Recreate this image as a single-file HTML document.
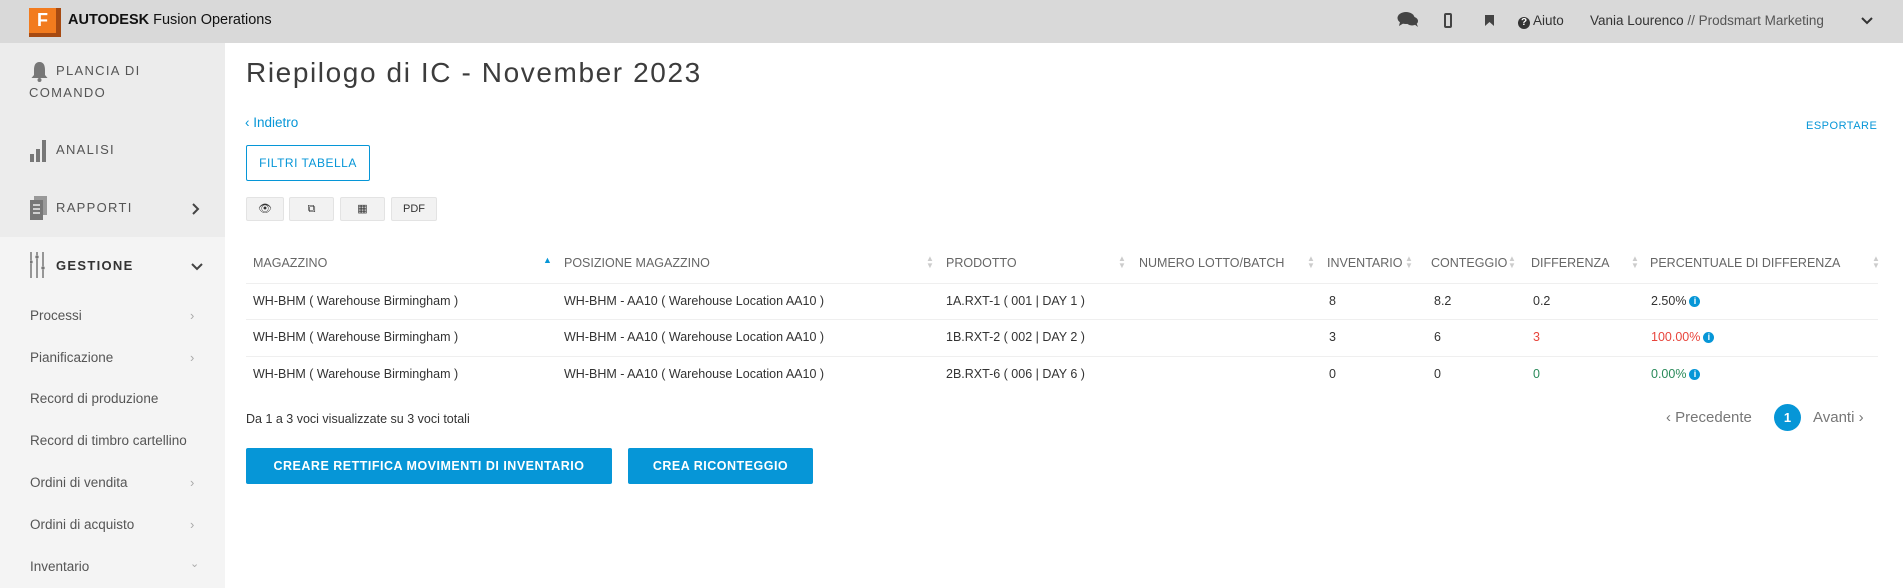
<!DOCTYPE html>
<html><head><meta charset="utf-8"><style>
*{box-sizing:border-box;margin:0;padding:0}
body{width:1903px;height:588px;overflow:hidden;background:#fff;font-family:"Liberation Sans",sans-serif;color:#3c3c3c;position:relative}
.a{position:absolute;white-space:nowrap}
#top{position:absolute;left:0;top:0;width:1903px;height:43px;background:#d9d9d9}
#side{position:absolute;left:0;top:43px;width:225px;height:545px;background:#ececec}
#side2{position:absolute;left:0;top:237px;width:225px;height:351px;background:#f4f4f4}
.sb{font-size:13px;letter-spacing:1.3px;color:#555}
.sub{font-size:13.5px;color:#555;left:30px}
.chev{color:#aaa;font-size:13px;left:190px}
.th{font-size:12.5px;color:#666;top:256px}
.sort{top:255px;font-size:8px;line-height:7px;color:#ccc}
.td{font-size:12.5px;color:#333}
.line{position:absolute;left:246px;width:1632px;height:1px;background:#efefef}
.ib{position:absolute;top:197px;height:24px;border:1px solid #e3e3e3;background:#f2f2f2;border-radius:2px;font-size:11px;color:#333;text-align:center;line-height:22px}
.btn{position:absolute;top:448px;height:36px;background:#0696d7;color:#fff;font-size:12.5px;font-weight:bold;letter-spacing:.5px;text-align:center;line-height:36px;border-radius:2px}
.info{display:inline-block;width:11px;height:11px;border-radius:50%;background:#0696d7;color:#fff;font-size:9px;font-weight:bold;text-align:center;line-height:11px;vertical-align:1px;margin-left:3px}
</style></head><body>
<div id="top"></div>
<div class="a" style="left:29px;top:8px;width:32px;height:29px;background:#a64a12"></div>
<div class="a" style="left:29px;top:8px;width:27px;height:25px;background:#f27b1e;color:#fff;font-weight:bold;font-size:18px;text-align:center;line-height:25px">F</div>
<div class="a" style="left:68px;top:12px;font-size:14.5px;color:#111"><b>AUTODESK</b> Fusion Operations</div>
<svg class="a" style="left:1397px;top:11px" width="22" height="18" viewBox="0 0 22 18"><ellipse cx="9" cy="7" rx="8.5" ry="6" fill="#444"/><path d="M3 11 L2 15 L7 12Z" fill="#444"/><ellipse cx="15" cy="10" rx="6" ry="4.5" fill="#444"/><path d="M17 13 L21 16 L19 11Z" fill="#444"/></svg>
<div class="a" style="left:1444px;top:13px;width:8px;height:15px;border:2px solid #444;border-radius:2px"></div>
<svg class="a" style="left:1485px;top:15px" width="9" height="11"><path d="M0 0H9V11L4.5 7L0 11Z" fill="#444"/></svg>
<div class="a" style="left:1518px;top:13px;font-size:13.5px;color:#333"><span style="display:inline-block;width:12px;height:12px;border-radius:50%;background:#333;color:#fff;font-size:10px;font-weight:bold;text-align:center;line-height:12px">?</span> Aiuto</div>
<div class="a" style="left:1590px;top:13px;font-size:13.5px;color:#333"><span style="color:#333">Vania Lourenco</span> <span style="color:#555">// Prodsmart Marketing</span></div>
<svg class="a" style="left:1861px;top:17px" width="12" height="8"><path d="M1 1L6 6L11 1" stroke="#333" stroke-width="2" fill="none"/></svg>

<div id="side"></div><div id="side2"></div>
<svg class="a" style="left:30px;top:61px" width="19" height="21"><path d="M9.5 1C5 1 4 5 4 9V14L1.5 17H17.5L15 14V9C15 5 14 1 9.5 1Z" fill="#777"/><circle cx="9.5" cy="19" r="2" fill="#777"/></svg>
<div class="a sb" style="left:56px;top:63px">PLANCIA DI</div>
<div class="a sb" style="left:29px;top:85px">COMANDO</div>
<svg class="a" style="left:30px;top:140px" width="17" height="22"><rect x="0" y="14" width="4" height="8" fill="#777"/><rect x="6" y="9" width="4" height="13" fill="#777"/><rect x="12" y="0" width="4" height="22" fill="#777"/></svg>
<div class="a sb" style="left:56px;top:142px">ANALISI</div>
<svg class="a" style="left:30px;top:196px" width="18" height="24"><rect x="4" y="0" width="13" height="19" fill="#999"/><rect x="0" y="4" width="13" height="20" fill="#777"/><path d="M3 9H10M3 13H10M3 17H10" stroke="#eee" stroke-width="1.5"/></svg>
<div class="a sb" style="left:56px;top:200px">RAPPORTI</div>
<svg class="a" style="left:192px;top:203px" width="8" height="12"><path d="M1 1L6 6L1 11" stroke="#444" stroke-width="2" fill="none"/></svg>
<svg class="a" style="left:30px;top:252px" width="15" height="26"><path d="M1 0V8M1 12V26M7 0V3M7 7V26M13 0V14M13 18V26" stroke="#777" stroke-width="1.5"/><circle cx="1" cy="10" r="1.7" fill="#777"/><circle cx="7" cy="5" r="1.7" fill="#777"/><circle cx="13" cy="16" r="1.7" fill="#777"/></svg>
<div class="a sb" style="left:56px;top:258px;color:#333;font-weight:bold">GESTIONE</div>
<svg class="a" style="left:191px;top:263px" width="12" height="8"><path d="M1 1L6 6L11 1" stroke="#444" stroke-width="2" fill="none"/></svg>
<div class="a sub" style="top:308px">Processi</div><div class="a chev" style="top:308px">›</div>
<div class="a sub" style="top:350px">Pianificazione</div><div class="a chev" style="top:350px">›</div>
<div class="a sub" style="top:391px">Record di produzione</div>
<div class="a sub" style="top:433px">Record di timbro cartellino</div>
<div class="a sub" style="top:475px">Ordini di vendita</div><div class="a chev" style="top:475px">›</div>
<div class="a sub" style="top:517px">Ordini di acquisto</div><div class="a chev" style="top:517px">›</div>
<div class="a sub" style="top:559px">Inventario</div><div class="a chev" style="top:557px;font-size:11px">⌄</div>

<div class="a" style="left:246px;top:57px;font-size:28px;letter-spacing:1.6px;color:#3c3c3c">Riepilogo di IC - November 2023</div>
<div class="a" style="left:245px;top:115px;font-size:13.5px;color:#0696d7">‹ Indietro</div>
<div class="a" style="left:1806px;top:120px;font-size:11px;letter-spacing:.5px;color:#0696d7">ESPORTARE</div>
<div class="a" style="left:246px;top:145px;width:124px;height:36px;border:1px solid #0696d7;border-radius:2px;color:#0696d7;font-size:12px;letter-spacing:.5px;text-align:center;line-height:34px">FILTRI TABELLA</div>
<div class="ib" style="left:246px;width:38px">👁</div>
<div class="ib" style="left:289px;width:45px">⧉</div>
<div class="ib" style="left:340px;width:45px">▦</div>
<div class="ib" style="left:391px;width:46px">PDF</div>

<div class="a th" style="left:253px">MAGAZZINO</div>
<div class="a" style="left:543px;top:255px;font-size:9px;color:#0696d7">▲</div>
<div class="a th" style="left:564px">POSIZIONE MAGAZZINO</div>
<div class="a sort" style="left:926px">▲<br>▼</div>
<div class="a th" style="left:946px">PRODOTTO</div>
<div class="a sort" style="left:1118px">▲<br>▼</div>
<div class="a th" style="left:1139px">NUMERO LOTTO/BATCH</div>
<div class="a sort" style="left:1307px">▲<br>▼</div>
<div class="a th" style="left:1327px">INVENTARIO</div>
<div class="a sort" style="left:1405px">▲<br>▼</div>
<div class="a th" style="left:1431px">CONTEGGIO</div>
<div class="a sort" style="left:1508px">▲<br>▼</div>
<div class="a th" style="left:1531px">DIFFERENZA</div>
<div class="a sort" style="left:1631px">▲<br>▼</div>
<div class="a th" style="left:1650px">PERCENTUALE DI DIFFERENZA</div>
<div class="a sort" style="left:1872px">▲<br>▼</div>
<div class="line" style="top:283px"></div>
<div class="line" style="top:319px"></div>
<div class="line" style="top:356px"></div>

<div class="a td" style="left:253px;top:294px">WH-BHM ( Warehouse Birmingham )</div>
<div class="a td" style="left:564px;top:294px">WH-BHM - AA10 ( Warehouse Location AA10 )</div>
<div class="a td" style="left:946px;top:294px">1A.RXT-1 ( 001 | DAY 1 )</div>
<div class="a td" style="left:1329px;top:294px">8</div>
<div class="a td" style="left:1434px;top:294px">8.2</div>
<div class="a td" style="left:1533px;top:294px">0.2</div>
<div class="a td" style="left:1651px;top:294px">2.50%<span class="info">i</span></div>

<div class="a td" style="left:253px;top:330px">WH-BHM ( Warehouse Birmingham )</div>
<div class="a td" style="left:564px;top:330px">WH-BHM - AA10 ( Warehouse Location AA10 )</div>
<div class="a td" style="left:946px;top:330px">1B.RXT-2 ( 002 | DAY 2 )</div>
<div class="a td" style="left:1329px;top:330px">3</div>
<div class="a td" style="left:1434px;top:330px">6</div>
<div class="a td" style="left:1533px;top:330px;color:#e8453c">3</div>
<div class="a td" style="left:1651px;top:330px;color:#e8453c">100.00%<span class="info">i</span></div>

<div class="a td" style="left:253px;top:367px">WH-BHM ( Warehouse Birmingham )</div>
<div class="a td" style="left:564px;top:367px">WH-BHM - AA10 ( Warehouse Location AA10 )</div>
<div class="a td" style="left:946px;top:367px">2B.RXT-6 ( 006 | DAY 6 )</div>
<div class="a td" style="left:1329px;top:367px">0</div>
<div class="a td" style="left:1434px;top:367px">0</div>
<div class="a td" style="left:1533px;top:367px;color:#2a8a5a">0</div>
<div class="a td" style="left:1651px;top:367px;color:#2a8a5a">0.00%<span class="info">i</span></div>

<div class="a" style="left:246px;top:412px;font-size:12.5px;color:#333">Da 1 a 3 voci visualizzate su 3 voci totali</div>
<div class="a" style="left:1666px;top:409px;font-size:15px;color:#777">‹ Precedente</div>
<div class="a" style="left:1774px;top:404px;width:27px;height:27px;border-radius:50%;background:#0696d7;color:#fff;font-size:13px;font-weight:bold;text-align:center;line-height:27px">1</div>
<div class="a" style="left:1813px;top:409px;font-size:15px;color:#777">Avanti ›</div>

<div class="btn" style="left:246px;width:366px">CREARE RETTIFICA MOVIMENTI DI INVENTARIO</div>
<div class="btn" style="left:628px;width:185px">CREA RICONTEGGIO</div>
</body></html>
